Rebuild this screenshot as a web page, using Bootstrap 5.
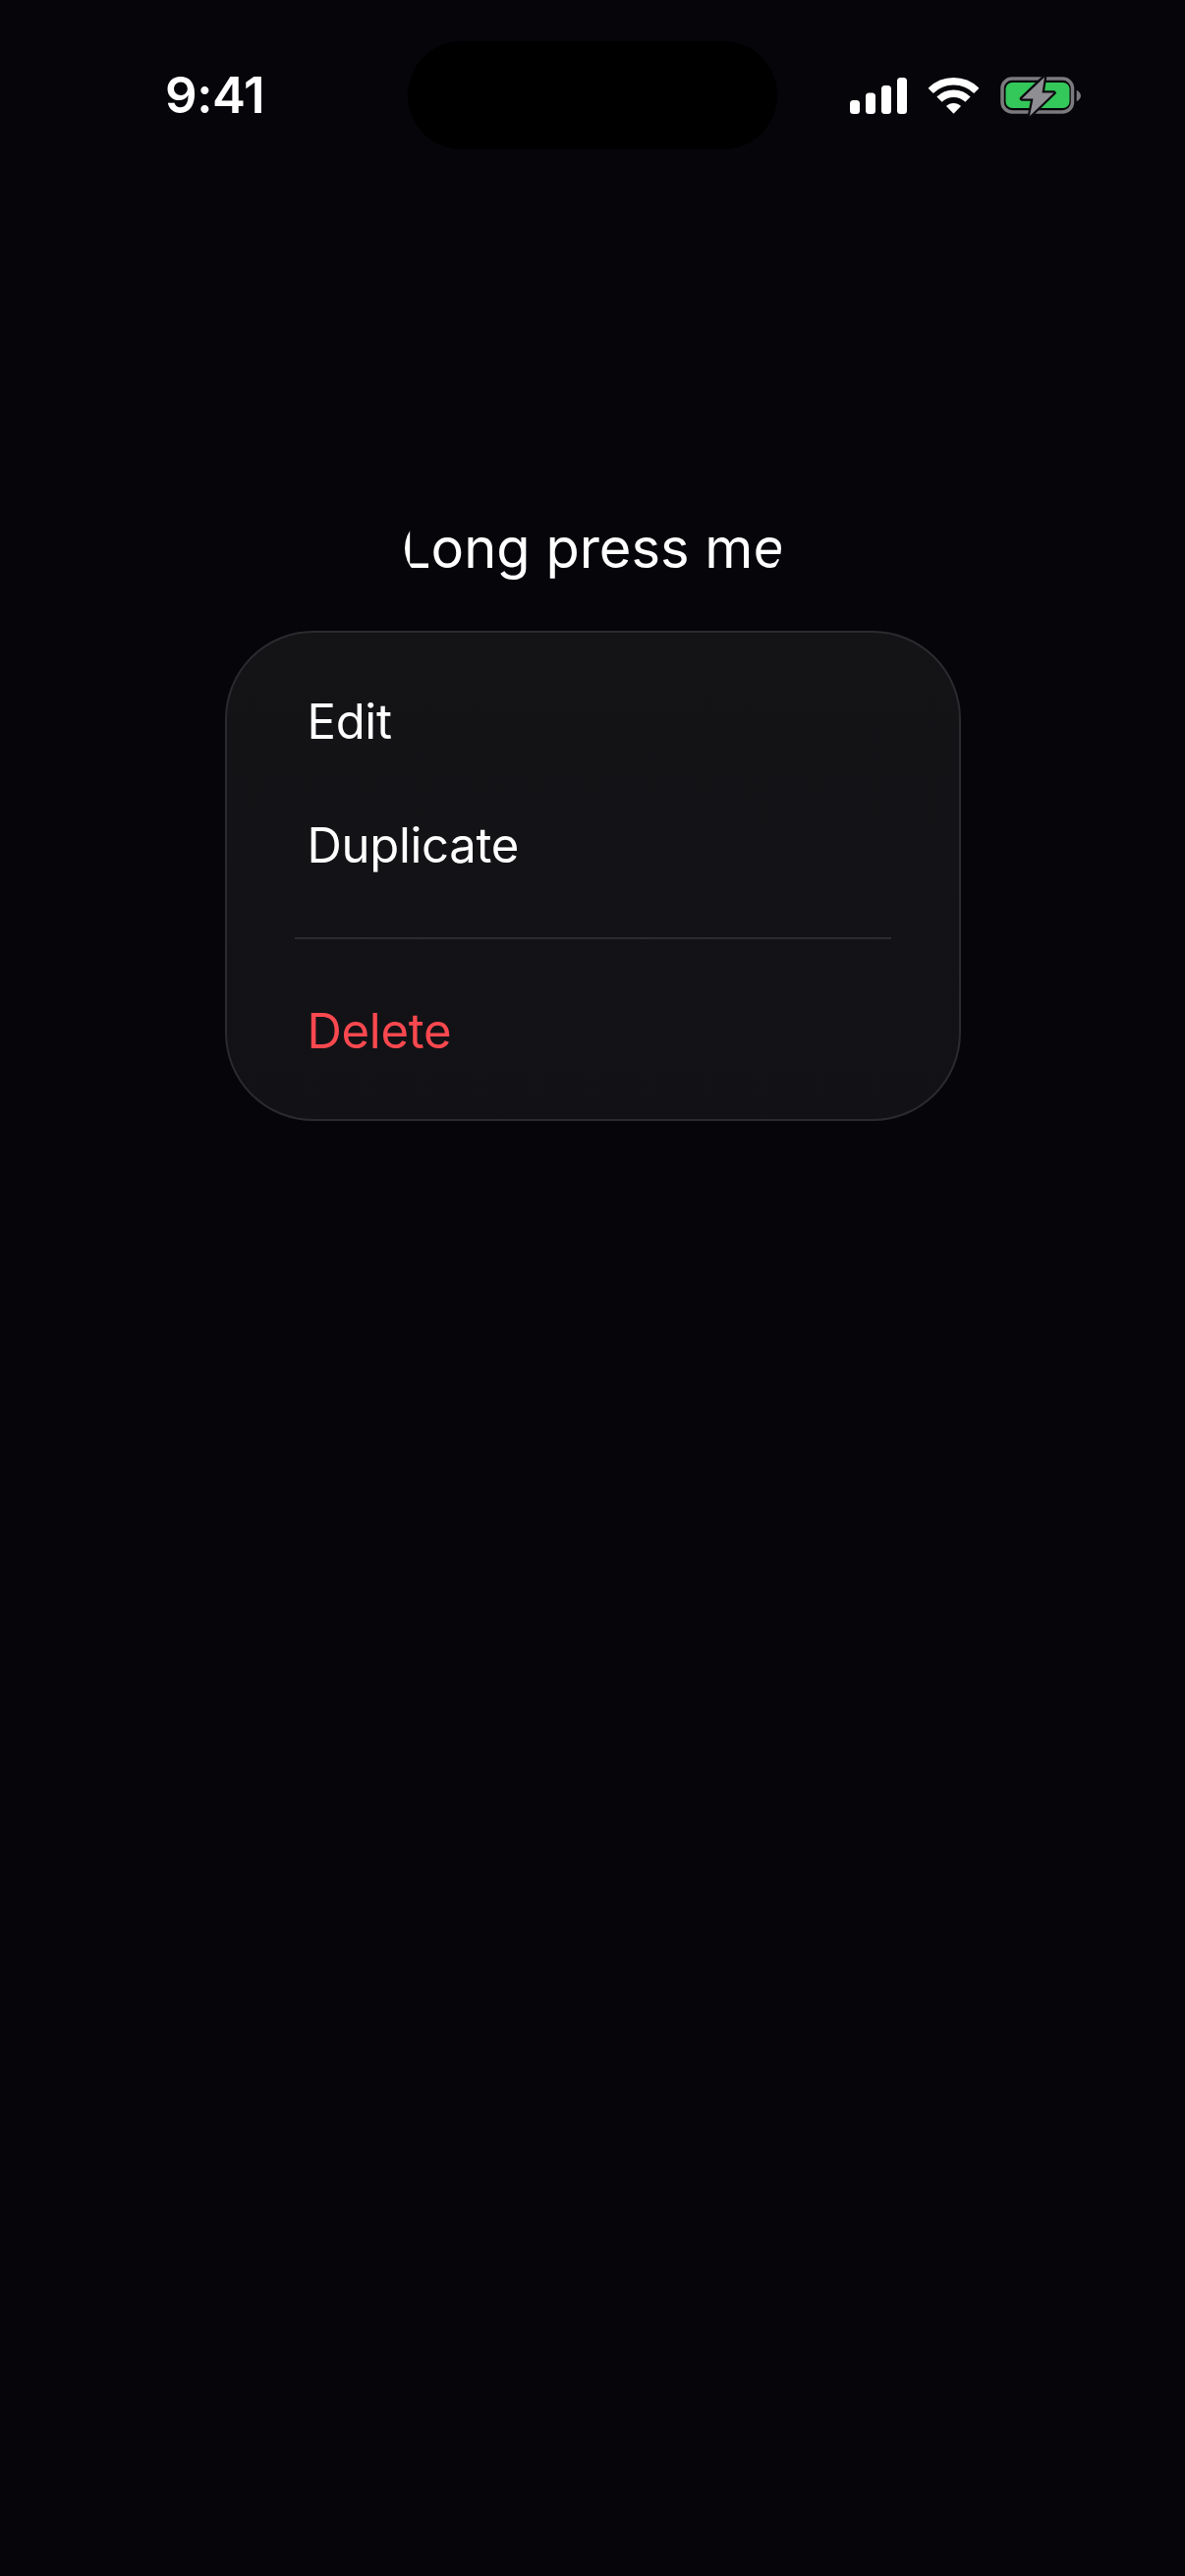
<!DOCTYPE html>
<html lang="en">
<head>
<meta charset="utf-8">
<title>Long press menu</title>
<link rel="stylesheet" href="https://cdn.jsdelivr.net/npm/bootstrap@5.3.0/dist/css/bootstrap.min.css">
<style>
html,body{height:100%}
body{background:#05050a;color:#fff;font-family:Inter,"Noto Sans",sans-serif;overflow:hidden}
.scr{min-height:2622px}
.stbar{padding-top:42px;height:152px}
.st-time{width:415px;padding-left:168px;font-size:51px;font-weight:600;line-height:110px;letter-spacing:-.4px}
.st-isle{width:376px;height:110px;border-radius:55px;background:#000}
.st-icons{margin-left:74px;gap:22px;height:110px}
.st-icons svg{display:block}
.st-batt{margin-left:-3px}
.press-pill{margin-top:373px;width:383px;height:66px;border-radius:33px;overflow:hidden;font-size:56px;line-height:66px;white-space:nowrap;display:flex;justify-content:center}
.sheet{margin-top:51px;width:749px;height:499px;border-radius:90px;background:linear-gradient(#141417,#121216);border:2px solid #2b2b2f;padding:28px 69px 0;--bs-list-group-bg:transparent}
.sheet .list-group-item{background:transparent;border:0;color:#fff;font-size:49px;line-height:126px;height:126px;padding:0 0 0 13px;letter-spacing:-.3px}
.sheet .list-group-item.del-item{color:#f9484f}
.sheet-rule{margin:30px 0 31px;border:0;border-top:2px solid #2c2c30;opacity:1}
</style>
</head>
<body>
<div class="scr d-flex flex-column">
  <div class="stbar d-flex align-items-start">
    <div class="st-time">9:41</div>
    <div class="st-isle"></div>
    <div class="st-icons d-flex align-items-center">
      <svg width="58" height="37" viewBox="0 0 58 37" fill="#fff" aria-hidden="true">
        <rect x="0" y="23" width="10" height="14" rx="3.5"/>
        <rect x="16" y="15.5" width="10" height="21.5" rx="3.5"/>
        <rect x="32" y="8" width="10" height="29" rx="3.5"/>
        <rect x="48" y="0" width="10" height="37" rx="3.5"/>
      </svg>
      <svg width="51" height="37" viewBox="0 0 51 37" aria-hidden="true">
        <path d="M2.2 13.4A33 33 0 0 1 48.8 13.4" fill="none" stroke="#fff" stroke-width="7.5"/>
        <path d="M11 22.2A20.5 20.5 0 0 1 40 22.2" fill="none" stroke="#fff" stroke-width="7.5"/>
        <path d="M25.5 36.7L18 29A10.6 10.6 0 0 1 33 29Z" fill="#fff"/>
      </svg>
      <svg class="st-batt" width="85" height="45" viewBox="0 0 85 45" aria-hidden="true">
        <rect x="5" y="5" width="71.5" height="34" rx="10" fill="none" stroke="#7b7b7e" stroke-width="3.5"/>
        <rect x="8.5" y="9" width="65" height="26" rx="6.5" fill="#34c759"/>
        <path d="M80.7 16.7C83 18 85 20 85 22.5S83 27 80.7 28.3Z" fill="#7b7b7e"/>
        <path d="M48 3.5L25 25.5H36.5L33 43L57.5 19.5H45.5Z" fill="#8e8e93" stroke="#0b0b0f" stroke-width="4.5" stroke-linejoin="round" paint-order="stroke"/>
      </svg>
    </div>
  </div>
  <div class="press-pill mx-auto">Long press me</div>
  <div class="sheet mx-auto">
    <div class="list-group list-group-flush">
      <div class="list-group-item">Edit</div>
      <div class="list-group-item">Duplicate</div>
      <hr class="sheet-rule">
      <div class="list-group-item del-item">Delete</div>
    </div>
  </div>
</div>
<script src="https://cdn.jsdelivr.net/npm/bootstrap@5.3.0/dist/js/bootstrap.bundle.min.js"></script>
</body>
</html>
